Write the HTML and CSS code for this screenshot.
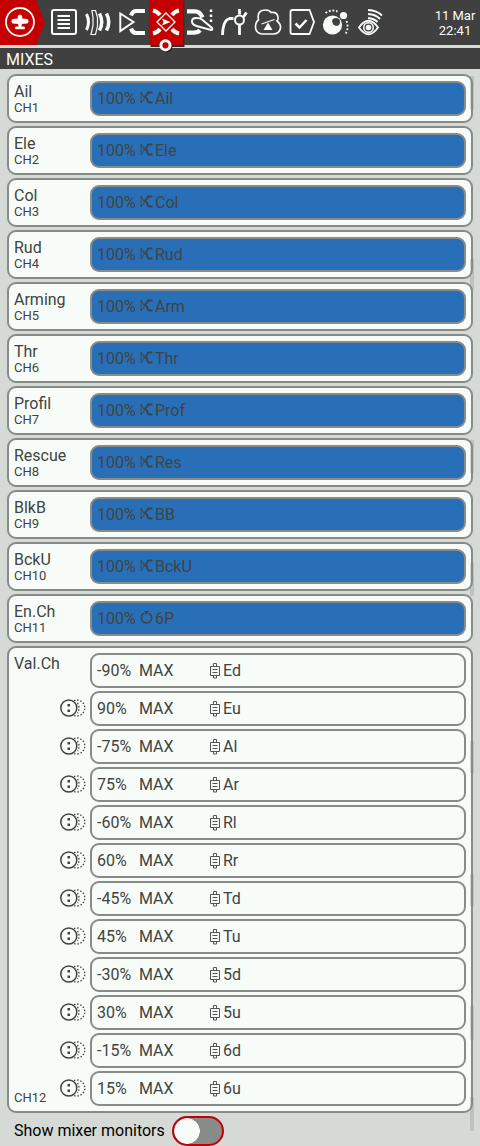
FILE: index.html
```html
<!DOCTYPE html>
<html lang="en">
<head>
<meta charset="utf-8">
<title>Mixes</title>
<link rel="stylesheet" href="styles.css">
</head>
<body>
<svg class="defs" width="0" height="0">
  <symbol id="input" viewBox="0 0 13 13"><path d="M1 1v11L4.500 7z" fill="none" stroke="currentColor" stroke-width=".9"/><path d="M12.500 1.500H9Q7 1.700 7 4L4.500 5.800 7 7.500Q7 11.300 9.500 11.500h3" fill="none" stroke="currentColor" stroke-width="1.800"/></symbol>
  <symbol id="pot" viewBox="0 0 13 13"><path d="M4.300 2.100A5.200 5.200 0 1 0 8.700 2.100" fill="none" stroke="currentColor" stroke-width="1.500"/><path d="M4 0h5L6.500 4z" fill="currentColor"/></symbol>
  <symbol id="slider" viewBox="0 0 10 16"><path d="M3.500 3.500v-3h3v3M3.500 12.500v2.500h3v-2.500M.5 3.500h9v9H.5zM2.500 6.500h5M2.500 9.500h5" fill="none" stroke="currentColor" stroke-width=".9"/></symbol>
  <symbol id="replace" viewBox="0 0 26 18"><circle cx="8.800" cy="9" r="8" fill="none" stroke="currentColor" stroke-width="1.500"/><path d="M7.500 5h2.500v2.500H7.500zM7.500 10.500h2.500V13H7.500z" fill="currentColor"/><path d="M14 1.500A8 8 0 1 1 14 16.500M17.500 4q1.500 2 1.500 5t-1.500 5" fill="none" stroke="currentColor" stroke-width="1.300" stroke-dasharray="1.500 1.700"/></symbol>
</svg>
<header class="topbar">
  <svg class="logo" viewBox="0 0 47 51"><path d="M0 0H36L45 22.500 36 45H0z" fill="#c40000"/><circle cx="20" cy="22" r="14" fill="none" stroke="#f8fcf8" stroke-width="1.800"/><path d="M17.800 16q2.200-3 4.400 0V18.500l5 .5q1.300.5 1.300 2.200t-1.300 2.300l-5.200.5-.6 2.500h2.600q1 .3 1 1.500t-1 1.300h-8q-1-.1-1-1.300t1-1.500h2.600l-.6-2.500-5.200-.5q-1.300-.6-1.300-2.300t1.300-2.200l5-.5z" fill="#f8fcf8"/></svg>
  <nav class="tabs">
    <svg viewBox="47 0 34 51"><rect x="52" y="10" width="24" height="24" rx="2"/><path d="M57.500 16H70M57.500 20H70M57.500 24H70M57.500 28H70"/></svg>
    <svg viewBox="81 0 34 51"><path d="M86.500 14q4 8 0 16" stroke-width="3"/><path d="M92 10.500h3.500l2 7v9l-2 8H91l2-9v-8z" stroke-width="1.200"/><path d="M99.500 13.500q4.500 8.500 0 17M106.500 13.500q4.500 8.500 0 17" stroke-width="3.500"/></svg>
    <svg viewBox="115 0 34 51"><path d="M120.300 13.500v17.500L133.500 22z"/><path d="M145 11h-9q-3.500 0-5 4.500M145 33h-9q-3.500 0-5-4.500" stroke-width="4"/></svg>
    <svg class="active" viewBox="149 0 34 51"><path d="M149 0h34v46h-34z" fill="#303030" stroke="none" transform="translate(1.500 1)"/><path d="M149 0h34v45h-34z" fill="#c40000" stroke="none"/><path d="M153 10.500q4.500 1 7 4.500M179 10.500q-4.500 1-7 4.500M153 33.500q4.500-1 7-4.500M179 33.500q-4.500-1-7-4.500" stroke-width="4"/><path d="M166 13l9 9-9 9-9-9z" stroke-width="1.300"/><path d="M162 18.500l8.500 3.500-8.500 3.500 1.500-3.500z" class="fill"/><circle cx="166.500" cy="46.500" r="5" stroke="#202020" stroke-width="2"/><circle cx="165.500" cy="45.300" r="4.600" fill="#c40000" stroke-width="3"/></svg>
    <svg viewBox="183 0 34 51"><path d="M187 11.300h8q5 0 7.500 6M187 32.700h7q4 0 6-2.500" stroke-width="4.300"/><path d="M197 18q-5-.5-5 3.500 0 3 4.500 4.500l14.500 4q2 0 1-2l-10-8.500q-2-1.500-5-1.500z" stroke-width="2" fill="#404040"/><path d="M211 9.500V23" stroke-width="2.500" stroke-dasharray="2.500 2.500"/></svg>
    <svg viewBox="217 0 34 51"><path d="M222.500 35q.5-15 7-16.500h4" stroke-width="2.800"/><path d="M239.500 9v5.500M239.500 25v10M243.500 17l3-4.500" stroke-width="2.800"/><circle cx="239.500" cy="20" r="4.500" stroke-width="2"/></svg>
    <svg viewBox="251 0 34 51"><path d="M258.500 20q-2-10 7-10 4 0 5.500 2.500 6-1 7 4.500.5 3-1 4 4 3 3.500 7-1 6-7.500 6h-11q-6.500-1-6.500-7 0-5 3-7z" stroke-width="1.600"/><path d="M261.500 24l13-4.500" stroke-width="1.300"/><path d="M268 22.500l4.500 7.500h-9z" class="fill"/></svg>
    <svg viewBox="285 0 34 51"><path d="M290.500 12q0-2 2-2h17l4.500 12-4.500 12h-17q-2 0-2-2z" stroke-width="1.800"/><path d="M295.500 23.500l4 4 7-7.500" stroke-width="2.500"/></svg>
    <svg viewBox="319 0 34 51"><circle cx="332.500" cy="25" r="9.600" class="fill"/><circle cx="336" cy="22" r="4" fill="#404040" stroke="none"/><path d="M332.500 22q0 4 5 4-3 2-5 0t0-4" class="fill"/><circle cx="343.500" cy="15.500" r="3.600" class="fill"/><path d="M325.500 13q6-4 12-1.500M346.500 21q2.500 7-1 13" stroke-dasharray="1.800 1.900" stroke-width="1.900"/></svg>
    <svg viewBox="353 0 34 51"><path d="M359 27.500q9.500-13.500 19 0-9.500 13.500-19 0z" stroke-width="1.800"/><circle cx="368.500" cy="27.500" r="4.800" stroke-width="1.500"/><circle cx="368.500" cy="27.500" r="2.800" class="fill"/><path d="M368 10q9 .5 14 5.500M368 14q8 .5 12 5M368 18q6 .5 9.500 4" stroke-width="1.900"/></svg>
  </nav>
  <div class="clock"><span>11 Mar</span><span>22:41</span></div>
</header>
<h1 class="title">MIXES</h1>
<main class="mixes">
  <section class="card"><div class="channel"><b>Ail</b><small>CH1</small></div><div class="line on"><span>100%</span><svg><use href="#input"/></svg><span>Ail</span></div></section>
  <section class="card"><div class="channel"><b>Ele</b><small>CH2</small></div><div class="line on"><span>100%</span><svg><use href="#input"/></svg><span>Ele</span></div></section>
  <section class="card"><div class="channel"><b>Col</b><small>CH3</small></div><div class="line on"><span>100%</span><svg><use href="#input"/></svg><span>Col</span></div></section>
  <section class="card"><div class="channel"><b>Rud</b><small>CH4</small></div><div class="line on"><span>100%</span><svg><use href="#input"/></svg><span>Rud</span></div></section>
  <section class="card"><div class="channel"><b>Arming</b><small>CH5</small></div><div class="line on"><span>100%</span><svg><use href="#input"/></svg><span>Arm</span></div></section>
  <section class="card"><div class="channel"><b>Thr</b><small>CH6</small></div><div class="line on"><span>100%</span><svg><use href="#input"/></svg><span>Thr</span></div></section>
  <section class="card"><div class="channel"><b>Profil</b><small>CH7</small></div><div class="line on"><span>100%</span><svg><use href="#input"/></svg><span>Prof</span></div></section>
  <section class="card"><div class="channel"><b>Rescue</b><small>CH8</small></div><div class="line on"><span>100%</span><svg><use href="#input"/></svg><span>Res</span></div></section>
  <section class="card"><div class="channel"><b>BlkB</b><small>CH9</small></div><div class="line on"><span>100%</span><svg><use href="#input"/></svg><span>BB</span></div></section>
  <section class="card"><div class="channel"><b>BckU</b><small>CH10</small></div><div class="line on"><span>100%</span><svg><use href="#input"/></svg><span>BckU</span></div></section>
  <section class="card"><div class="channel"><b>En.Ch</b><small>CH11</small></div><div class="line on"><span>100%</span><svg><use href="#pot"/></svg><span>6P</span></div></section>
  <section class="card group">
    <div class="channel"><b>Val.Ch</b><small>CH12</small></div>
    <div class="modes">
      <i></i>
      <svg><use href="#replace"/></svg><svg><use href="#replace"/></svg><svg><use href="#replace"/></svg><svg><use href="#replace"/></svg><svg><use href="#replace"/></svg><svg><use href="#replace"/></svg><svg><use href="#replace"/></svg><svg><use href="#replace"/></svg><svg><use href="#replace"/></svg><svg><use href="#replace"/></svg><svg><use href="#replace"/></svg>
    </div>
    <div class="lines">
      <div class="line"><span>-90%</span><span>MAX</span><svg><use href="#slider"/></svg><span>Ed</span></div>
      <div class="line"><span>90%</span><span>MAX</span><svg><use href="#slider"/></svg><span>Eu</span></div>
      <div class="line"><span>-75%</span><span>MAX</span><svg><use href="#slider"/></svg><span>Al</span></div>
      <div class="line"><span>75%</span><span>MAX</span><svg><use href="#slider"/></svg><span>Ar</span></div>
      <div class="line"><span>-60%</span><span>MAX</span><svg><use href="#slider"/></svg><span>Rl</span></div>
      <div class="line"><span>60%</span><span>MAX</span><svg><use href="#slider"/></svg><span>Rr</span></div>
      <div class="line"><span>-45%</span><span>MAX</span><svg><use href="#slider"/></svg><span>Td</span></div>
      <div class="line"><span>45%</span><span>MAX</span><svg><use href="#slider"/></svg><span>Tu</span></div>
      <div class="line"><span>-30%</span><span>MAX</span><svg><use href="#slider"/></svg><span>5d</span></div>
      <div class="line"><span>30%</span><span>MAX</span><svg><use href="#slider"/></svg><span>5u</span></div>
      <div class="line"><span>-15%</span><span>MAX</span><svg><use href="#slider"/></svg><span>6d</span></div>
      <div class="line"><span>15%</span><span>MAX</span><svg><use href="#slider"/></svg><span>6u</span></div>
    </div>
  </section>
  <svg class="scroll" viewBox="0 0 4 1077"><path d="M0 7h4v33H0zM0 190h4v31H0zM0 371h4v33H0zM0 494h4v33H0zM0 672h4v32H0zM0 805h4v32H0zM0 937h4v34H0zM0 1028h4v34H0z"/></svg>
</main>
<footer class="monitors"><span>Show mixer monitors</span><div class="switch"></div></footer>
</body>
</html>
```
FILE: styles.css
```css
* { box-sizing: border-box; }
body {
  margin: 0;
  width: 480px;
  height: 1146px;
  overflow: hidden;
  background: #d6dad6;
  color: #404440;
  font: 16px/20px Roboto, sans-serif;
}
svg { display: block; flex: none; }
.defs { position: absolute; }
.topbar {
  display: flex;
  height: 48px;
  background: #404040;
  border-bottom: 3px solid #d6dad6;
}
.logo { width: 47px; height: 51px; }
.tabs { display: flex; height: 51px; }
.tabs svg { width: 34px; height: 51px; fill: none; stroke: #f8fcf8; stroke-width: 2; overflow: visible; }
.tabs .active { position: relative; z-index: 1; }
.tabs .fill { fill: #f8fcf8; stroke: none; }
.clock {
  display: flex;
  flex-direction: column;
  align-items: center;
  width: 60px;
  margin-left: 38px;
  padding: 8px 0 0 5px;
  color: #f8fcf8;
  font-size: 13px;
  line-height: 15px;
  white-space: nowrap;
}
.title {
  margin: 0;
  height: 21px;
  padding-left: 6px;
  background: #404040;
  color: #f8fcf8;
  font-size: 16px;
  font-weight: 400;
  line-height: 24px;
}
.mixes {
  position: relative;
  display: flex;
  flex-direction: column;
  gap: 3px;
  padding: 5px 7px 0;
}
.card {
  display: flex;
  width: 466px;
  height: 49px;
  padding: 5px;
  border: 2px solid #888c88;
  border-radius: 9px;
  background: #f8fcf8;
}
.channel { display: flex; flex-direction: column; width: 76px; }
.channel b { font-weight: 400; line-height: 22px; }
.channel small { font-size: 13px; line-height: 13px; margin-top: -2px; }
.line {
  display: flex;
  align-items: center;
  width: 376px;
  height: 35px;
  padding-left: 5px;
  border: 2px solid #888c88;
  border-radius: 9px;
}
.line span:first-child { width: 42px; }
.on { background: #286fb8; }
.on span:first-child { width: 43px; }
.on svg { width: 13px; height: 13px; margin: -2px 2px 0 0; }
.group { height: 467px; }
.group .channel { width: 46px; justify-content: space-between; }
.group .channel small { margin-bottom: 2px; }
.modes { display: flex; flex-direction: column; width: 30px; }
.modes i { flex: none; height: 38px; }
.modes svg { width: 26px; height: 18px; margin: 8px 0 12px; }
.lines { display: flex; flex-direction: column; gap: 3px; }
.lines svg { width: 10px; height: 16px; margin-right: 3px; }
.lines span:nth-child(2) { width: 71px; }
.scroll { position: absolute; left: 470px; top: 0; width: 4px; height: 1077px; fill: #888c88; opacity: .3; }
.monitors {
  display: flex;
  align-items: center;
  gap: 7px;
  height: 33px;
  padding: 2px 0 0 14px;
  color: #000;
}
.switch {
  width: 52px;
  height: 30px;
  border: 2px solid #c40000;
  border-radius: 15px;
  background: radial-gradient(circle 13px at 13px 13px, #f8fcf8 12.500px, #888c88 13px);
}
```
